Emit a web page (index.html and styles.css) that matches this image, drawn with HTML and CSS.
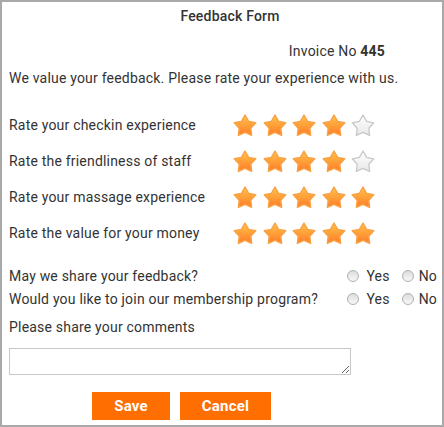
FILE: index.html
```html
<!DOCTYPE html>
<html>
<head>
<meta charset="utf-8">
<link rel="stylesheet" href="styles.css">
</head>
<body>
<svg class="defs" width="0" height="0">
  <defs>
    <linearGradient id="gOn" x1="0" y1="0" x2="0" y2="1">
      <stop offset="0" stop-color="#ffc34d"/>
      <stop offset="0.55" stop-color="#ff9c37"/>
      <stop offset="1" stop-color="#ff7b29"/>
    </linearGradient>
    <linearGradient id="gOff" x1="0" y1="0" x2="0" y2="1">
      <stop offset="0" stop-color="#ffffff"/>
      <stop offset="1" stop-color="#e8e8e8"/>
    </linearGradient>
    <symbol id="starOn" viewBox="0 0 24 23">
      <polygon points="12,1 15.59,7.37 22.75,8.81 17.8,14.19 18.64,21.44 12,18.4 5.36,21.44 6.2,14.19 1.25,8.81 8.41,7.37" fill="url(#gOn)" stroke="#f9a244" stroke-width="1.4" stroke-linejoin="round"/>
    </symbol>
    <symbol id="starOff" viewBox="0 0 24 23">
      <polygon points="12,1 15.59,7.37 22.75,8.81 17.8,14.19 18.64,21.44 12,18.4 5.36,21.44 6.2,14.19 1.25,8.81 8.41,7.37" fill="url(#gOff)" stroke="#c8c8c8" stroke-width="1.3" stroke-linejoin="round"/>
    </symbol>
  </defs>
</svg>
<div class="form">
  <div class="title">Feedback Form</div>
  <div class="invoice">Invoice No <b>445</b></div>
  <div class="intro">We value your feedback. Please rate your experience with us.</div>

  <div class="ratings">
    <div class="rlabel">Rate your checkin experience</div>
    <div class="stars">
      <svg class="star"><use href="#starOn"/></svg><svg class="star"><use href="#starOn"/></svg><svg class="star"><use href="#starOn"/></svg><svg class="star"><use href="#starOn"/></svg><svg class="star"><use href="#starOff"/></svg>
    </div>
    <div class="rlabel">Rate the friendliness of staff</div>
    <div class="stars">
      <svg class="star"><use href="#starOn"/></svg><svg class="star"><use href="#starOn"/></svg><svg class="star"><use href="#starOn"/></svg><svg class="star"><use href="#starOn"/></svg><svg class="star"><use href="#starOff"/></svg>
    </div>
    <div class="rlabel">Rate your massage experience</div>
    <div class="stars">
      <svg class="star"><use href="#starOn"/></svg><svg class="star"><use href="#starOn"/></svg><svg class="star"><use href="#starOn"/></svg><svg class="star"><use href="#starOn"/></svg><svg class="star"><use href="#starOn"/></svg>
    </div>
    <div class="rlabel">Rate the value for your money</div>
    <div class="stars">
      <svg class="star"><use href="#starOn"/></svg><svg class="star"><use href="#starOn"/></svg><svg class="star"><use href="#starOn"/></svg><svg class="star"><use href="#starOn"/></svg><svg class="star"><use href="#starOn"/></svg>
    </div>
  </div>

  <div class="questions">
    <div class="qrow">
      <div class="qlabel">May we share your feedback?</div>
      <div class="opts">
        <span class="opt"><span class="radio"></span>Yes</span>
        <span class="opt opt-no"><span class="radio"></span>No</span>
      </div>
    </div>
    <div class="qrow">
      <div class="qlabel">Would you like to join our membership program?</div>
      <div class="opts">
        <span class="opt"><span class="radio"></span>Yes</span>
        <span class="opt opt-no"><span class="radio"></span>No</span>
      </div>
    </div>
  </div>

  <div class="comments-label">Please share your comments</div>
  <textarea class="comments"></textarea>

  <div class="buttons">
    <button class="btn btn-save">Save</button>
    <button class="btn btn-cancel">Cancel</button>
  </div>
</div>
</body>
</html>
```

FILE: styles.css
```css
html, body {
  margin: 0;
  padding: 0;
  background: #ffffff;
}

.defs {
  display: block;
  width: 0;
  height: 0;
  overflow: hidden;
}

.form {
  box-sizing: border-box;
  width: 444px;
  height: 427px;
  border: 2px solid #a9a9a9;
  padding: 0 5px 0 7px;
  font-family: Roboto, "Liberation Sans", Arial, sans-serif;
  font-size: 14px;
  letter-spacing: 0.2px;
  color: #333333;
}

.title {
  margin-top: 4px;
  line-height: 20px;
  text-align: center;
  padding-left: 14px;
  font-weight: 500;
}

.invoice {
  margin-top: 15px;
  line-height: 20px;
  text-align: right;
  padding-right: 52px;
}

.invoice b {
  font-weight: 700;
}

.intro {
  margin-top: 7px;
  line-height: 20px;
}

.ratings {
  margin-top: 19px;
  display: grid;
  grid-template-columns: 224px auto;
  grid-auto-rows: 36px;
  align-items: center;
}

.rlabel {
  line-height: 36px;
}

.stars {
  display: flex;
  gap: 5.5px;
  align-items: center;
  padding-top: 1px;
}

.star {
  width: 24px;
  height: 23px;
  display: block;
}

.questions {
  margin-top: 13px;
}

.qrow {
  display: flex;
  align-items: center;
  height: 23px;
}

.qlabel {
  flex: 1;
}

.opts {
  display: flex;
  align-items: center;
}

.opt {
  display: inline-flex;
  align-items: center;
}

.opt-no {
  margin-left: 12px;
}

.radio {
  box-sizing: border-box;
  width: 12px;
  height: 12px;
  border-radius: 50%;
  border: 1px solid #b0b0b0;
  background: linear-gradient(#dcdcdc, #f8f8f8);
  margin-right: 7px;
}

.opt-no .radio {
  margin-right: 5px;
}

.comments-label {
  margin-top: 7px;
  line-height: 20px;
}

.comments {
  display: block;
  box-sizing: border-box;
  margin: 11px 0 0 0;
  width: 342px;
  height: 27px;
  border: 1px solid #c8c8c8;
  padding: 0;
  resize: both;
  font-family: inherit;
}

.buttons {
  margin-top: 17px;
  padding-left: 83px;
  display: flex;
  gap: 10px;
}

.btn {
  height: 28px;
  border: none;
  background: #ff6e00;
  color: #ffffff;
  font-family: Roboto, "Liberation Sans", Arial, sans-serif;
  font-size: 15px;
  font-weight: 700;
  letter-spacing: 0.2px;
  padding: 0;
  margin: 0;
}

.btn-save {
  width: 78px;
}

.btn-cancel {
  width: 91px;
}
```
